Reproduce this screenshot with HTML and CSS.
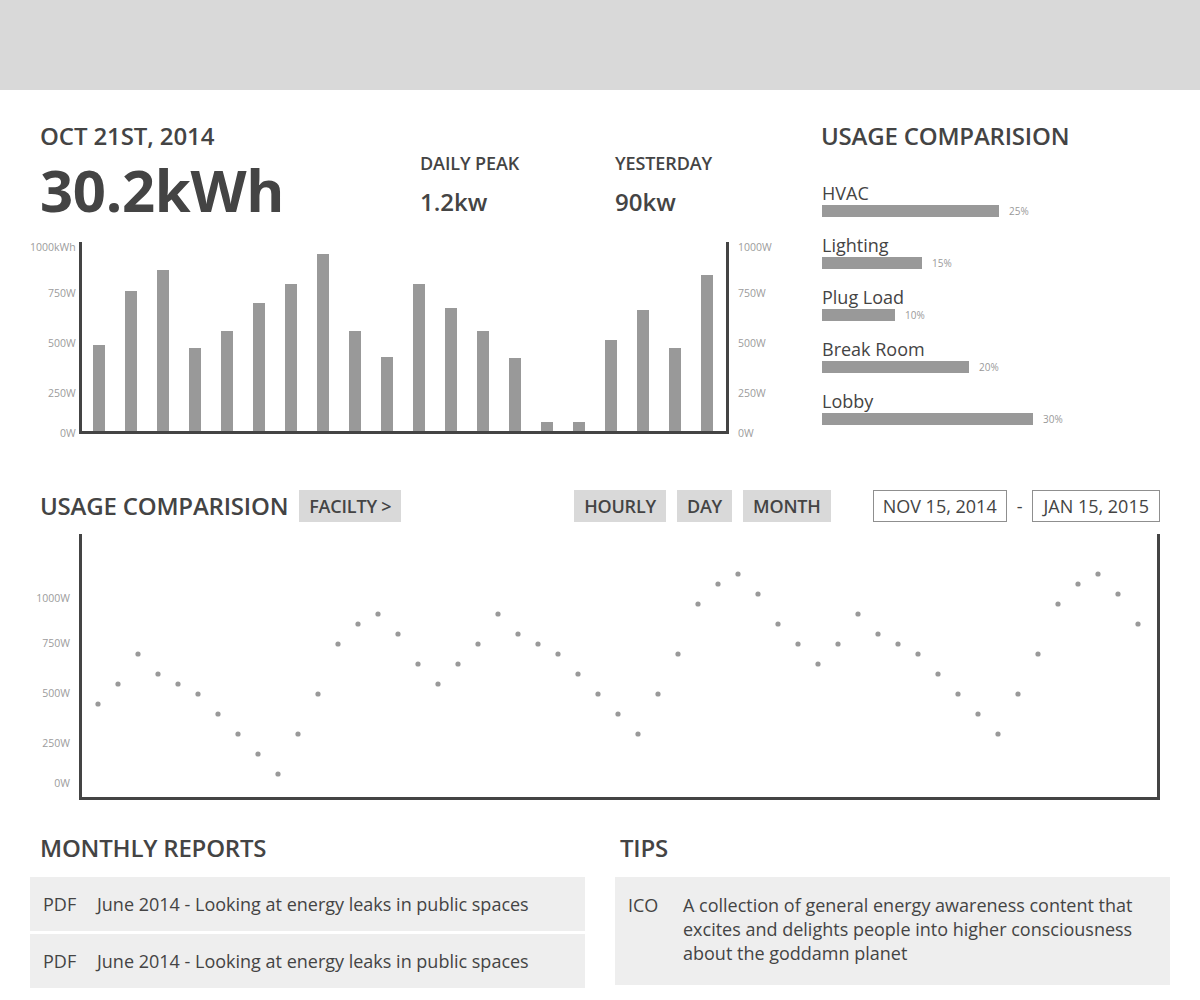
FILE: index.html
```html
<!DOCTYPE html>
<html lang="en">
<head>
<meta charset="utf-8">
<title>Energy Dashboard</title>
<link rel="stylesheet" href="styles.css">
</head>
<body>
<header class="topbar"></header>
<main class="page">
  <section class="top">
    <div class="top-left">
      <div class="stats">
        <div class="stat-main">
          <div class="date">OCT 21ST, 2014</div>
          <div class="total">30.2kWh</div>
        </div>
        <div class="stat">
          <div class="stat-label">DAILY PEAK</div>
          <div class="stat-value">1.2kw</div>
        </div>
        <div class="stat">
          <div class="stat-label">YESTERDAY</div>
          <div class="stat-value">90kw</div>
        </div>
      </div>
      <div class="barchart">
        <div class="ylabels ylabels-left bar-ylabels">
          <span>1000kWh</span><span>750W</span><span>500W</span><span>250W</span><span>0W</span>
        </div>
        <div class="bar-plot">
          <div class="bar" style="height:86px"></div>
          <div class="bar" style="height:140px"></div>
          <div class="bar" style="height:161px"></div>
          <div class="bar" style="height:83px"></div>
          <div class="bar" style="height:100px"></div>
          <div class="bar" style="height:128px"></div>
          <div class="bar" style="height:147px"></div>
          <div class="bar" style="height:177px"></div>
          <div class="bar" style="height:100px"></div>
          <div class="bar" style="height:74px"></div>
          <div class="bar" style="height:147px"></div>
          <div class="bar" style="height:123px"></div>
          <div class="bar" style="height:100px"></div>
          <div class="bar" style="height:73px"></div>
          <div class="bar" style="height:9px"></div>
          <div class="bar" style="height:9px"></div>
          <div class="bar" style="height:91px"></div>
          <div class="bar" style="height:121px"></div>
          <div class="bar" style="height:83px"></div>
          <div class="bar" style="height:156px"></div>
        </div>
        <div class="ylabels ylabels-right bar-ylabels">
          <span>1000W</span><span>750W</span><span>500W</span><span>250W</span><span>0W</span>
        </div>
      </div>
    </div>
    <div class="top-right">
      <h2 class="heading">USAGE COMPARISION</h2>
      <ul class="usage-list">
        <li class="usage-item">
          <div class="usage-name">HVAC</div>
          <div class="usage-row"><div class="usage-bar" style="width:177px"></div><span class="usage-pct">25%</span></div>
        </li>
        <li class="usage-item">
          <div class="usage-name">Lighting</div>
          <div class="usage-row"><div class="usage-bar" style="width:100px"></div><span class="usage-pct">15%</span></div>
        </li>
        <li class="usage-item">
          <div class="usage-name">Plug Load</div>
          <div class="usage-row"><div class="usage-bar" style="width:73px"></div><span class="usage-pct">10%</span></div>
        </li>
        <li class="usage-item">
          <div class="usage-name">Break Room</div>
          <div class="usage-row"><div class="usage-bar" style="width:147px"></div><span class="usage-pct">20%</span></div>
        </li>
        <li class="usage-item">
          <div class="usage-name">Lobby</div>
          <div class="usage-row"><div class="usage-bar" style="width:211px"></div><span class="usage-pct">30%</span></div>
        </li>
      </ul>
    </div>
  </section>

  <section class="comparison">
    <div class="controls">
      <h2 class="heading">USAGE COMPARISION</h2>
      <button class="chip chip-facility">FACILTY &gt;</button>
      <div class="spacer"></div>
      <div class="chip-group">
        <button class="chip">HOURLY</button>
        <button class="chip">DAY</button>
        <button class="chip">MONTH</button>
      </div>
      <div class="date-range">
        <span class="date-box">NOV 15, 2014</span>
        <span class="date-sep">-</span>
        <span class="date-box">JAN 15, 2015</span>
      </div>
    </div>
    <div class="scatter">
      <div class="ylabels ylabels-left scatter-ylabels">
        <span>1000W</span><span>750W</span><span>500W</span><span>250W</span><span>0W</span>
      </div>
      <div class="scatter-plot">
        <svg class="dots" width="1075" height="263" viewBox="0 0 1075 263" xmlns="http://www.w3.org/2000/svg">
          <g fill="#999999">
            <circle cx="16" cy="170" r="2.6"/><circle cx="36" cy="150" r="2.6"/><circle cx="56" cy="120" r="2.6"/><circle cx="76" cy="140" r="2.6"/><circle cx="96" cy="150" r="2.6"/>
            <circle cx="116" cy="160" r="2.6"/><circle cx="136" cy="180" r="2.6"/><circle cx="156" cy="200" r="2.6"/><circle cx="176" cy="220" r="2.6"/><circle cx="196" cy="240" r="2.6"/>
            <circle cx="216" cy="200" r="2.6"/><circle cx="236" cy="160" r="2.6"/><circle cx="256" cy="110" r="2.6"/><circle cx="276" cy="90" r="2.6"/><circle cx="296" cy="80" r="2.6"/>
            <circle cx="316" cy="100" r="2.6"/><circle cx="336" cy="130" r="2.6"/><circle cx="356" cy="150" r="2.6"/><circle cx="376" cy="130" r="2.6"/><circle cx="396" cy="110" r="2.6"/>
            <circle cx="416" cy="80" r="2.6"/><circle cx="436" cy="100" r="2.6"/><circle cx="456" cy="110" r="2.6"/><circle cx="476" cy="120" r="2.6"/><circle cx="496" cy="140" r="2.6"/>
            <circle cx="516" cy="160" r="2.6"/><circle cx="536" cy="180" r="2.6"/><circle cx="556" cy="200" r="2.6"/><circle cx="576" cy="160" r="2.6"/><circle cx="596" cy="120" r="2.6"/>
            <circle cx="616" cy="70" r="2.6"/><circle cx="636" cy="50" r="2.6"/><circle cx="656" cy="40" r="2.6"/><circle cx="676" cy="60" r="2.6"/><circle cx="696" cy="90" r="2.6"/>
            <circle cx="716" cy="110" r="2.6"/><circle cx="736" cy="130" r="2.6"/><circle cx="756" cy="110" r="2.6"/><circle cx="776" cy="80" r="2.6"/><circle cx="796" cy="100" r="2.6"/>
            <circle cx="816" cy="110" r="2.6"/><circle cx="836" cy="120" r="2.6"/><circle cx="856" cy="140" r="2.6"/><circle cx="876" cy="160" r="2.6"/><circle cx="896" cy="180" r="2.6"/>
            <circle cx="916" cy="200" r="2.6"/><circle cx="936" cy="160" r="2.6"/><circle cx="956" cy="120" r="2.6"/><circle cx="976" cy="70" r="2.6"/><circle cx="996" cy="50" r="2.6"/>
            <circle cx="1016" cy="40" r="2.6"/><circle cx="1036" cy="60" r="2.6"/><circle cx="1056" cy="90" r="2.6"/>
          </g>
        </svg>
      </div>
    </div>
  </section>

  <section class="bottom">
    <div class="col">
      <h2 class="heading heading-indent">MONTHLY REPORTS</h2>
      <ul class="reports">
        <li class="report-row"><span class="tag">PDF</span><span>June 2014 - Looking at energy leaks in public spaces</span></li>
        <li class="report-row"><span class="tag">PDF</span><span>June 2014 - Looking at energy leaks in public spaces</span></li>
      </ul>
    </div>
    <div class="col">
      <h2 class="heading heading-indent-sm">TIPS</h2>
      <div class="tip">
        <span class="tag tag-ico">ICO</span>
        <p class="tip-text">A collection of general energy awareness content that excites and delights people into higher consciousness about the goddamn planet</p>
      </div>
    </div>
  </section>
</main>
</body>
</html>
```

FILE: styles.css
```css
* { box-sizing: border-box; }

html, body {
  margin: 0;
  padding: 0;
  background: #ffffff;
}

body {
  font-family: "Open Sans", "Liberation Sans", sans-serif;
  color: #444444;
  font-size: 18px;
  line-height: 24px;
}

ul { list-style: none; margin: 0; padding: 0; }
h2, p { margin: 0; }

.topbar {
  height: 90px;
  background: #d9d9d9;
}

.page {
  padding: 0 30px;
}

/* ---------- top ---------- */
.top {
  display: flex;
  padding-top: 30px;
}

.top-left {
  width: 790px;
  flex: none;
}

.top-right {
  flex: 1;
  padding-left: 1px;
}

.stats {
  display: flex;
  padding-left: 10px;
}

.stat-main {
  width: 380px;
}

.date {
  font-size: 24px;
  line-height: 32px;
  font-weight: 600;
  letter-spacing: -0.1px;
}

.total {
  margin-top: 8px;
  font-size: 58px;
  line-height: 60px;
  font-weight: 700;
  letter-spacing: -0.3px;
}

.stat {
  width: 195px;
  margin-top: 31px;
}

.stat-label {
  font-size: 18px;
  line-height: 24px;
  font-weight: 600;
  letter-spacing: -0.1px;
}

.stat-value {
  margin-top: 11px;
  font-size: 24px;
  line-height: 32px;
  font-weight: 600;
}

.heading {
  font-size: 24px;
  line-height: 32px;
  font-weight: 600;
  color: #444444;
  white-space: nowrap;
  letter-spacing: -0.2px;
}

/* bar chart */
.barchart {
  display: flex;
  align-items: flex-start;
  height: 192px;
  margin-top: 22px;
}

.ylabels {
  width: 49px;
  flex: none;
  display: grid;
  font-size: 10.5px;
  line-height: 14px;
  color: #9c9c9c;
}

.ylabels-left {
  text-align: right;
  padding-right: 6px;
}

.ylabels-right {
  text-align: left;
  padding-left: 9px;
  width: 60px;
}

.bar-ylabels {
  margin-top: -2px;
  grid-template-rows: 46px 50px 50px 40px 14px;
}

.bar-plot {
  width: 650px;
  height: 192px;
  flex: none;
  display: flex;
  align-items: flex-end;
  gap: 20px;
  padding-left: 11px;
  border-left: 3px solid #444444;
  border-right: 3px solid #444444;
  border-bottom: 3px solid #444444;
}

.bar {
  width: 12px;
  background: #999999;
}

/* usage list */
.usage-list {
  margin-top: 29px;
  padding-left: 1px;
}

.usage-item + .usage-item {
  margin-top: 16px;
}

.usage-name {
  font-size: 18px;
  line-height: 24px;
}

.usage-row {
  display: flex;
  align-items: center;
  gap: 10px;
  height: 12px;
}

.usage-bar {
  height: 12px;
  background: #999999;
}

.usage-pct {
  font-size: 10px;
  line-height: 12px;
  color: #999999;
}

/* ---------- comparison ---------- */
.comparison {
  margin-top: 56px;
}

.controls {
  display: flex;
  align-items: center;
  height: 32px;
  padding: 0 10px;
}

.chip {
  font-family: inherit;
  font-size: 18px;
  font-weight: 600;
  line-height: 32px;
  height: 32px;
  padding: 0 10px;
  border: 0;
  background: #d9d9d9;
  color: #444444;
  margin: 0;
  letter-spacing: -0.2px;
}

.chip-facility {
  margin-left: 11px;
}

.spacer { flex: 1; }

.chip-group {
  display: flex;
  gap: 11px;
}

.date-range {
  display: flex;
  align-items: center;
  margin-left: 42px;
}

.date-box {
  height: 32px;
  line-height: 30px;
  padding: 0 9px;
  border: 1px solid #8f8f8f;
  font-size: 18px;
}

.date-box + .date-sep + .date-box {
  padding: 0 10px;
}

.date-sep {
  margin: 0 10px;
  font-size: 18px;
}

.scatter {
  display: flex;
  align-items: flex-start;
  height: 266px;
  margin-top: 12px;
}

.scatter-ylabels {
  padding-right: 9px;
  padding-top: 57px;
  grid-template-rows: 45px 50px 50px 40px 14px;
}

.scatter-plot {
  width: 1081px;
  height: 266px;
  flex: none;
  border-left: 3px solid #444444;
  border-right: 3px solid #444444;
  border-bottom: 3px solid #444444;
}

.dots { display: block; }

/* ---------- bottom ---------- */
.bottom {
  display: flex;
  gap: 30px;
  margin-top: 32px;
}

.col {
  width: 555px;
}

.heading-indent { padding-left: 10px; }
.heading-indent-sm { padding-left: 5px; }

.reports {
  margin-top: 13px;
}

.report-row {
  display: flex;
  align-items: center;
  height: 54px;
  padding-left: 13px;
  background: #eeeeee;
  font-size: 18px;
}

.report-row + .report-row {
  margin-top: 3px;
}

.tag {
  width: 54px;
  flex: none;
}

.tip {
  display: flex;
  margin-top: 13px;
  padding: 16px 25px 20px 13px;
  background: #eeeeee;
  font-size: 18px;
  line-height: 24px;
}

.tag-ico {
  width: 55px;
}

.tip-text {
  flex: 1;
}
```
